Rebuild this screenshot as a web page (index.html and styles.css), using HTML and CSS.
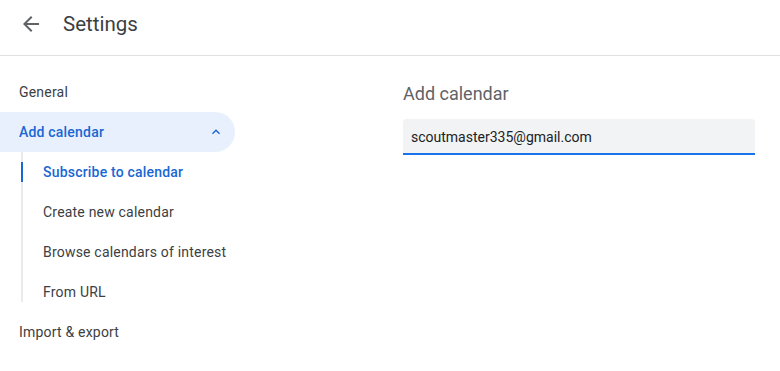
FILE: index.html
```html
<!DOCTYPE html>
<html lang="en">
<head>
  <meta charset="UTF-8">
  <meta name="viewport" content="width=device-width, initial-scale=1.0">
  <title>Settings</title>
  <link rel="stylesheet" href="styles.css">
</head>
<body>
  <!-- Header -->
  <header class="topbar">
    <button class="back-btn" aria-label="Back">
      <svg viewBox="0 0 24 24" width="24" height="24">
        <path d="M20 11H7.83l5.59-5.59L12 4l-8 8 8 8 1.41-1.41L7.83 13H20v-2z" fill="#5f6368"/>
      </svg>
    </button>
    <h1 class="title">Settings</h1>
  </header>

  <div class="layout">
    <!-- Side nav -->
    <nav class="sidenav">
      <a class="nav-item">General</a>
      <a class="nav-item open">
        <span>Add calendar</span>
        <svg class="chevron" viewBox="0 0 24 24" width="16" height="16">
          <path d="M12 8l-6 6 1.41 1.41L12 10.83l4.59 4.58L18 14z" fill="#1967d2"/>
        </svg>
      </a>
      <div class="sub-list">
        <a class="sub-item active">Subscribe to calendar</a>
        <a class="sub-item">Create new calendar</a>
        <a class="sub-item">Browse calendars of interest</a>
        <a class="sub-item">From URL</a>
      </div>
      <a class="nav-item">Import &amp; export</a>
    </nav>

    <!-- Main -->
    <main class="content">
      <h2 class="section-title">Add calendar</h2>
      <div class="field">
        <input type="text" value="scoutmaster335@gmail.com">
      </div>
    </main>
  </div>
</body>
</html>
```

FILE: styles.css
```css
/* Reset */
body, html {
  margin: 0;
  padding: 0;
  font-family: Roboto, Arial, sans-serif;
  background: #fff;
  color: #3c4043;
}

/* Header */
.topbar {
  height: 56px;
  display: flex;
  align-items: center;
  border-bottom: 1px solid #e0e0e0;
  box-sizing: border-box;
  padding: 0 0 8px 19px;
}

.back-btn {
  border: none;
  background: none;
  padding: 0;
  width: 24px;
  height: 24px;
  cursor: pointer;
}

.back-btn svg {
  display: block;
}

.title {
  margin: 0 0 0 20px;
  font-size: 20.5px;
  font-weight: 400;
  color: #3c4043;
}

/* Layout */
.layout {
  display: grid;
  grid-template-columns: 235px 352px;
  column-gap: 168px;
  padding-top: 16px;
}

/* Side nav */
.sidenav {
  display: flex;
  flex-direction: column;
}

.nav-item {
  height: 40px;
  display: flex;
  align-items: center;
  justify-content: space-between;
  padding: 0 11px 0 19px;
  font-size: 14px;
  letter-spacing: 0.2px;
  color: #3c4043;
  cursor: pointer;
}

.nav-item.open {
  background: #e8f0fe;
  color: #1967d2;
  font-weight: 500;
  border-radius: 0 20px 20px 0;
}

.chevron {
  display: block;
}

.sub-list {
  position: relative;
  display: flex;
  flex-direction: column;
}

.sub-list::before {
  content: "";
  position: absolute;
  left: 21px;
  top: 0;
  bottom: 10px;
  width: 2px;
  background: #e8eaed;
}

.sub-item {
  position: relative;
  height: 40px;
  display: flex;
  align-items: center;
  padding-left: 43px;
  font-size: 14px;
  letter-spacing: 0.2px;
  color: #3c4043;
  cursor: pointer;
}

.sub-item.active {
  color: #1967d2;
  font-weight: 500;
}

.sub-item.active::before {
  content: "";
  position: absolute;
  left: 21px;
  top: 10px;
  height: 20px;
  width: 2px;
  background: #1967d2;
}

/* Main */
.section-title {
  margin: 0;
  height: 40px;
  line-height: 44px;
  font-size: 18px;
  font-weight: 400;
  color: #5f6368;
}

.field {
  margin-top: 7px;
}

.field input {
  width: 100%;
  box-sizing: border-box;
  height: 36px;
  border: none;
  border-bottom: 2px solid #1a73e8;
  border-radius: 4px 4px 0 0;
  background: #f1f3f4;
  padding: 2px 8px 0;
  font-family: Roboto, Arial, sans-serif;
  font-size: 14px;
  color: #202124;
  outline: none;
}
```
